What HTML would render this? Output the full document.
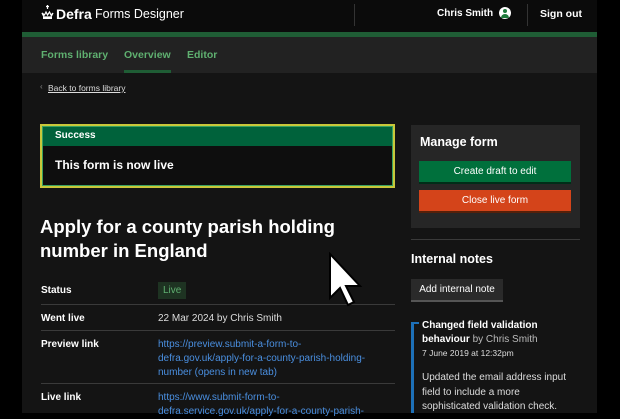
<!DOCTYPE html>
<html><head><meta charset="utf-8"><style>
*{margin:0;padding:0;box-sizing:border-box}
body{width:620px;height:413px;overflow:hidden;background:#000;font-family:"Liberation Sans",sans-serif;color:#fff;position:relative}
.a{position:absolute;white-space:nowrap}
.b{font-weight:bold}
a{color:#4a8fe0}
</style></head><body>
<div class="a" style="left:22px;top:0;width:575px;height:32px;background:#0b0b0b"></div>
<div class="a" style="left:22px;top:32px;width:575px;height:5px;background:#1f5d35"></div>
<div class="a" style="left:22px;top:37px;width:575px;height:36px;background:#222"></div>
<div class="a" style="left:22px;top:73px;width:575px;height:340px;background:#141414"></div>
<svg class="a" style="left:40px;top:5px" width="15" height="15" viewBox="0 0 15 15"><path d="M7.5 0v4M6 1.5h3M2 8l2 4h7l2-4-2 2-1.5-3L7.5 10 6 7l-1.5 3z" stroke="#fff" stroke-width="1.2" fill="none"/><rect x="3" y="12" width="9" height="2" fill="#fff"/></svg>
<div class="a b" style="left:56px;top:6px;font-size:14px">Defra</div>
<div class="a" style="left:95px;top:7px;font-size:12.5px">Forms Designer</div>
<div class="a" style="left:354px;top:4px;width:1px;height:22px;background:#333"></div>
<div class="a b" style="left:437px;top:8px;font-size:10px">Chris Smith</div>
<div class="a" style="left:499px;top:7px;width:12px;height:12px;border-radius:50%;background:#fff"></div>
<div class="a" style="left:503px;top:9px;width:4px;height:4px;border-radius:50%;background:#1f7a3c"></div>
<div class="a" style="left:501px;top:14px;width:8px;height:4px;border-radius:4px 4px 0 0;background:#1f7a3c"></div>
<div class="a" style="left:527px;top:4px;width:1px;height:22px;background:#333"></div>
<div class="a b" style="left:540px;top:8px;font-size:10.5px">Sign out</div>
<div class="a b" style="left:41px;top:49px;font-size:10.5px;color:#5fb070">Forms library</div>
<div class="a b" style="left:124px;top:49px;font-size:10.5px;color:#5fb070">Overview</div>
<div class="a b" style="left:187px;top:49px;font-size:10.5px;color:#5fb070">Editor</div>
<div class="a" style="left:124px;top:70px;width:47px;height:3px;background:#1f5d35"></div>
<div class="a" style="left:40px;top:82px;font-size:8px;color:#888">‹</div>
<div class="a" style="left:48px;top:83px;font-size:8.5px;text-decoration:underline;color:#ddd">Back to forms library</div>
<div class="a" style="left:40px;top:124px;width:355px;height:64px;border:2px solid #c8c83a;background:#37a060"></div>
<div class="a" style="left:43px;top:127px;width:349px;height:58px;background:#0e0e0e"></div>
<div class="a" style="left:43px;top:127px;width:349px;height:19px;background:#00623b"></div>
<div class="a b" style="left:55px;top:130px;font-size:10px">Success</div>
<div class="a b" style="left:55px;top:158px;font-size:12px">This form is now live</div>
<div class="a b" style="left:40px;top:215px;font-size:18.5px;line-height:24px">Apply for a county parish holding<br>number in England</div>
<div class="a b" style="left:41px;top:285px;font-size:10px">Status</div>
<div class="a" style="left:158px;top:282px;width:28px;height:17px;background:#1e3322"></div>
<div class="a" style="left:163px;top:285px;font-size:10px;color:#5fb070">Live</div>
<div class="a" style="left:41px;top:304px;width:354px;height:1px;background:#3a3a3a"></div>
<div class="a b" style="left:41px;top:313px;font-size:10px">Went live</div>
<div class="a" style="left:158px;top:313px;font-size:10px;color:#ddd">22 Mar 2024 by Chris Smith</div>
<div class="a" style="left:41px;top:330px;width:354px;height:1px;background:#3a3a3a"></div>
<div class="a b" style="left:41px;top:339px;font-size:10px">Preview link</div>
<div class="a" style="left:158px;top:338px;font-size:10px;line-height:14px"><a>https://preview.submit-a-form-to-<br>defra.gov.uk/apply-for-a-county-parish-holding-<br>number (opens in new tab)</a></div>
<div class="a" style="left:41px;top:383px;width:354px;height:1px;background:#3a3a3a"></div>
<div class="a b" style="left:41px;top:392px;font-size:10px">Live link</div>
<div class="a" style="left:158px;top:391px;font-size:10px;line-height:14px"><a>https://www.submit-form-to-<br>defra.service.gov.uk/apply-for-a-county-parish-</a></div>
<svg class="a" style="left:328px;top:252px" width="36" height="56" viewBox="0 0 36 56"><path d="M2 2v44l10-10 8 17 6-3-8-16h14z" fill="#fff" stroke="#000" stroke-width="2"/></svg>
<div class="a" style="left:411px;top:125px;width:169px;height:103px;background:#262626"></div>
<div class="a b" style="left:420px;top:135px;font-size:12.5px">Manage form</div>
<div class="a" style="left:419px;top:161px;width:152px;height:21px;background:#00703c;box-shadow:0 2px 0 #002d18;font-size:10px;text-align:center;line-height:21px">Create draft to edit</div>
<div class="a" style="left:419px;top:190px;width:152px;height:21px;background:#d4441a;box-shadow:0 2px 0 #55200a;font-size:10px;text-align:center;line-height:21px">Close live form</div>
<div class="a" style="left:411px;top:239px;width:169px;height:1px;background:#3a3a3a"></div>
<div class="a b" style="left:411px;top:252px;font-size:12.5px">Internal notes</div>
<div class="a" style="left:411px;top:279px;width:92px;height:21px;background:#2a2a2a;box-shadow:0 2px 0 #555;font-size:10px;text-align:center;line-height:21px">Add internal note</div>
<div class="a" style="left:411px;top:322px;width:3px;height:91px;background:#1d70b8"></div>
<div class="a" style="left:411px;top:322px;width:8px;height:2px;background:#1d70b8"></div>
<div class="a" style="left:422px;top:319px;font-size:10px;line-height:14px"><b>Changed field validation<br>behaviour</b> <span style="color:#bbb">by Chris Smith</span></div>
<div class="a" style="left:422px;top:348px;font-size:8.5px;color:#ddd">7 June 2019 at 12:32pm</div>
<div class="a" style="left:422px;top:371px;font-size:10px;line-height:14.5px;color:#ddd">Updated the email address input<br>field to include a more<br>sophisticated validation check.</div>
</body></html>
